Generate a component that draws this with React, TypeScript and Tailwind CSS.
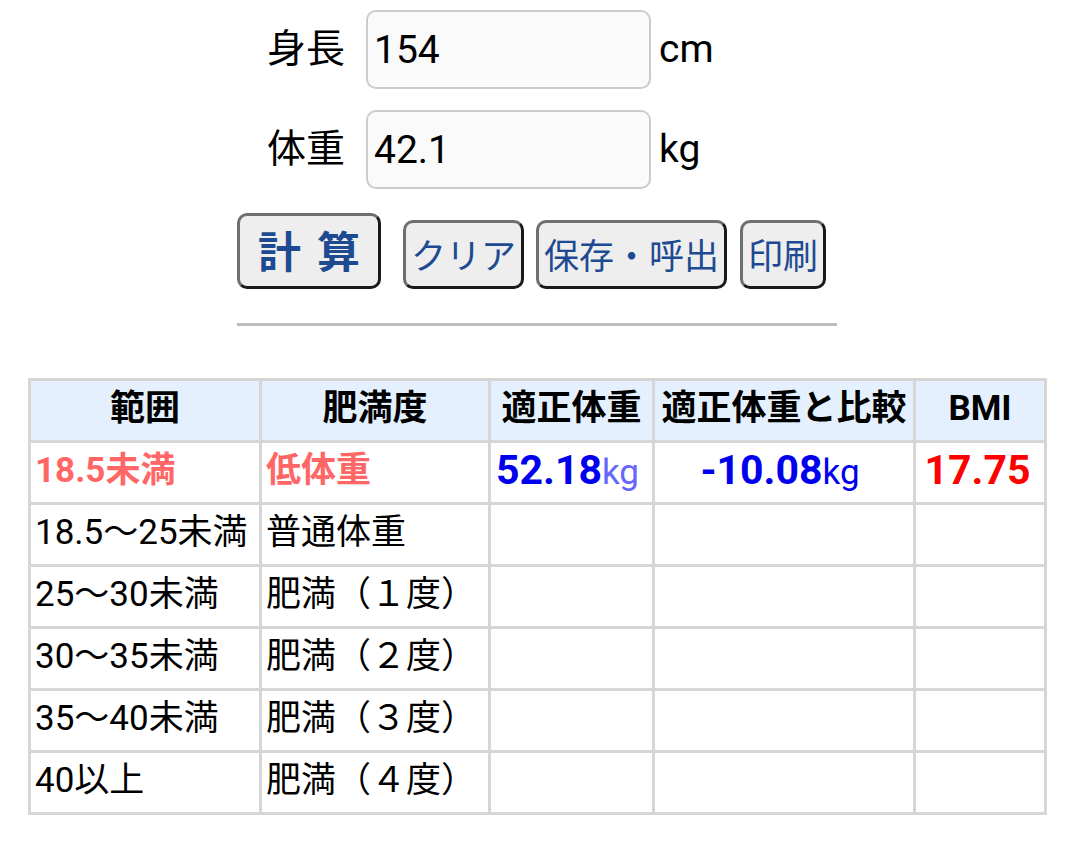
import React from "react";

const font = "font-['Roboto','Noto_Sans_CJK_JP',sans-serif]";

function FormRow({ label, value, unit }: { label: string; value: string; unit: string }) {
  return (
    <div className="flex items-center">
      <span className="text-[39px] leading-none text-black w-[76px] mr-[23px] shrink-0 whitespace-nowrap">{label}</span>
      <input
        readOnly
        value={value}
        className="w-[285px] h-[79px] shrink-0 rounded-[10px] border-2 border-[#cccccc] bg-[#fafafa] pl-[6px] text-[39px] text-black outline-none font-['Roboto','Noto_Sans_CJK_JP',sans-serif]"
      />
      <span className="ml-[8px] text-[39px] leading-none text-black whitespace-nowrap">{unit}</span>
    </div>
  );
}

const btn =
  "flex items-center justify-center rounded-[10px] border-[3px] border-t-[#6f6f6f] border-l-[#6f6f6f] border-b-[#1a1a1a] border-r-[#1a1a1a] bg-[#eeeeee] text-[#1d4a91] leading-none whitespace-nowrap";

const rows: [string, string][] = [
  ["18.5～25未満", "普通体重"],
  ["25～30未満", "肥満（１度）"],
  ["30～35未満", "肥満（２度）"],
  ["35～40未満", "肥満（３度）"],
  ["40以上", "肥満（４度）"],
];

const td = "border-[3px] border-[#d6d6d6] h-[62px] p-0 pb-[5px]";

export default function App() {
  return (
    <div className={`w-[1080px] h-[841px] bg-white overflow-hidden ${font}`}>
      <div className="pt-[10px] pl-[267px] flex flex-col gap-[21px]">
        <FormRow label="身長" value="154" unit="cm" />
        <FormRow label="体重" value="42.1" unit="kg" />
      </div>

      <div className="mt-[24px] pl-[237px] flex items-end">
        <button className={`${btn} w-[144px] h-[76px] text-[43px] font-bold tracking-[16px] pl-[16px] pt-[4px]`}>計算</button>
        <button className={`${btn} w-[121px] h-[69px] text-[35px] ml-[22px] pt-[6px]`}>クリア</button>
        <button className={`${btn} w-[191px] h-[69px] text-[35px] ml-[12px] pt-[6px]`}>保存・呼出</button>
        <button className={`${btn} w-[86px] h-[69px] text-[35px] ml-[13px] pt-[6px]`}>印刷</button>
      </div>

      <div className="mt-[34px] ml-[237px] w-[600px] h-[3px] bg-[#bdbdbd]" />

      <table className="mt-[52px] ml-[28px] border-collapse table-fixed w-[1016px] text-[35px] leading-none">
        <colgroup>
          <col className="w-[231px]" />
          <col className="w-[229px]" />
          <col className="w-[164px]" />
          <col className="w-[261px]" />
          <col className="w-[131px]" />
        </colgroup>
        <thead>
          <tr className="bg-[#e4f0fd] font-bold text-black">
            <th className={td}>範囲</th>
            <th className={td}>肥満度</th>
            <th className={td}>適正体重</th>
            <th className={td}>適正体重と比較</th>
            <th className={td}>BMI</th>
          </tr>
        </thead>
        <tbody>
          <tr>
            <td className={`${td} pl-[4px] font-bold text-[#ff6666] whitespace-nowrap`}>18.5未満</td>
            <td className={`${td} pl-[4px] font-bold text-[#ff6666] whitespace-nowrap`}>低体重</td>
            <td className={`${td} text-center pr-[8px] whitespace-nowrap`}>
              <span className="text-[41px] font-bold text-[#0000ee]">52.18</span>
              <span className="text-[35px] text-[#6666ff]">kg</span>
            </td>
            <td className={`${td} text-center pr-[8px] whitespace-nowrap`}>
              <span className="text-[41px] font-bold text-[#0000ee]">-10.08</span>
              <span className="text-[35px] text-[#0000ee]">kg</span>
            </td>
            <td className={`${td} text-center pr-[5px]`}>
              <span className="text-[41px] font-bold text-[#ff0000]">17.75</span>
            </td>
          </tr>
          {rows.map(([a, b]) => (
            <tr key={a}>
              <td className={`${td} pl-[4px] text-black whitespace-nowrap`}>{a}</td>
              <td className={`${td} pl-[4px] text-black whitespace-nowrap`}>{b}</td>
              <td className={td}></td>
              <td className={td}></td>
              <td className={td}></td>
            </tr>
          ))}
        </tbody>
      </table>
    </div>
  );
}
